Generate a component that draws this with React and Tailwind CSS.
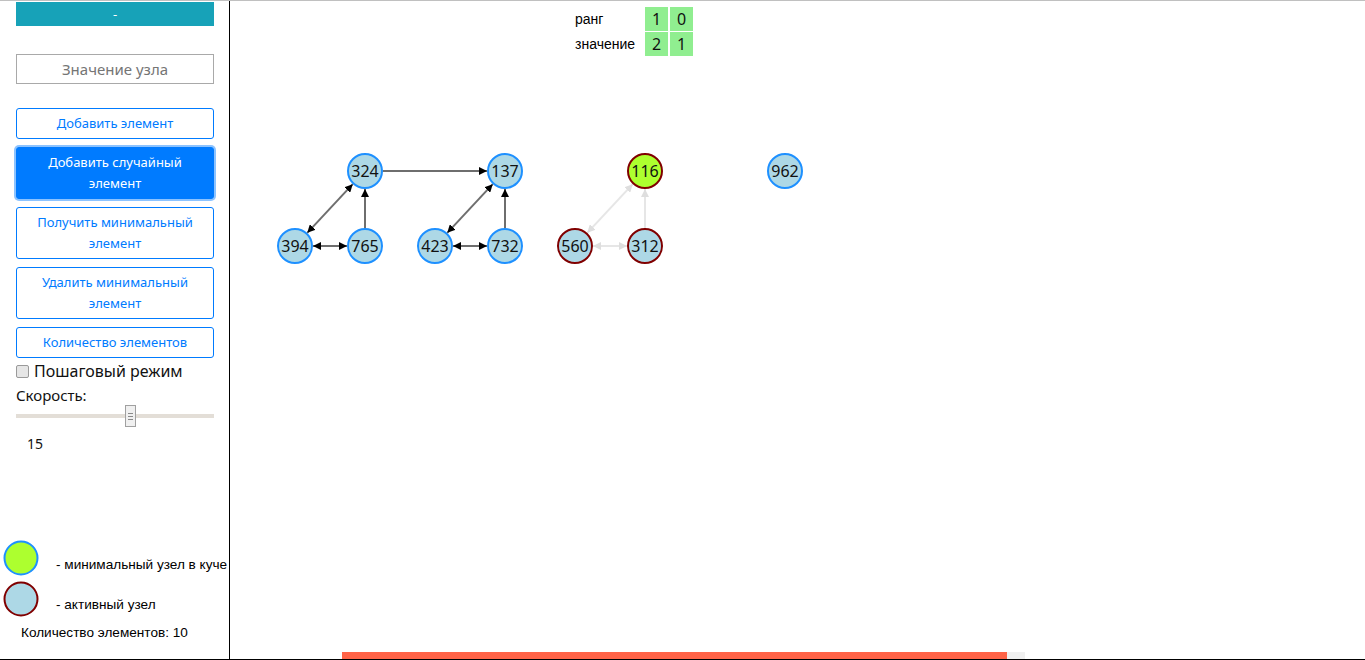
const nodes = {
  324: { x: 135, y: 115 },
  137: { x: 275, y: 115 },
  116: { x: 415, y: 115, fill: "#adff2f", active: true },
  962: { x: 555, y: 115 },
  394: { x: 65, y: 190 },
  765: { x: 135, y: 190 },
  423: { x: 205, y: 190 },
  732: { x: 275, y: 190 },
  560: { x: 345, y: 190, active: true },
  312: { x: 415, y: 190, active: true },
};

const edges = [
  { a: 324, b: 137 },
  { a: 765, b: 324 },
  { a: 394, b: 324, both: true },
  { a: 394, b: 765, both: true },
  { a: 423, b: 137, both: true },
  { a: 423, b: 732, both: true },
  { a: 732, b: 137 },
  { a: 560, b: 116, both: true, faded: true },
  { a: 560, b: 312, both: true, faded: true },
  { a: 312, b: 116, faded: true },
];

function Edge({ a, b, both, faded }) {
  const p = nodes[a];
  const q = nodes[b];
  const dx = q.x - p.x;
  const dy = q.y - p.y;
  const len = Math.hypot(dx, dy);
  const ux = dx / len;
  const uy = dy / len;
  const r = 18;
  const end = faded ? "url(#arrowLight)" : "url(#arrow)";
  return (
    <line
      x1={p.x + ux * r}
      y1={p.y + uy * r}
      x2={q.x - ux * r}
      y2={q.y - uy * r}
      stroke={faded ? "#e6e6e6" : "#6e6e6e"}
      strokeWidth="2"
      markerEnd={end}
      markerStart={both ? end : undefined}
    />
  );
}

function Graph() {
  return (
    <svg width="1135" height="260" className="block">
      <defs>
        <marker id="arrow" markerUnits="userSpaceOnUse" markerWidth="8" markerHeight="8" refX="8" refY="4" orient="auto-start-reverse">
          <path d="M0,0 L8,4 L0,8 z" fill="#000" />
        </marker>
        <marker id="arrowLight" markerUnits="userSpaceOnUse" markerWidth="8" markerHeight="8" refX="8" refY="4" orient="auto-start-reverse">
          <path d="M0,0 L8,4 L0,8 z" fill="#dedede" />
        </marker>
      </defs>
      {edges.map((e) => (
        <Edge key={e.a + "-" + e.b} {...e} />
      ))}
      {Object.entries(nodes).map(([v, n]) => (
        <g key={v}>
          <circle cx={n.x} cy={n.y} r="17" fill={n.fill || "#add8e6"} stroke={n.active ? "#800000" : "#1e90ff"} strokeWidth="2" />
          <text x={n.x} y={n.y + 6} textAnchor="middle" fontSize="16" fill="#111" style={{ fontFamily: '"Noto Sans", sans-serif' }}>
            {v}
          </text>
        </g>
      ))}
    </svg>
  );
}

function OutlineButton({ children, tall }) {
  return (
    <button className={`mt-[8px] w-[198px] ${tall ? "h-[52px]" : "h-[31px]"} rounded-[3px] border border-[#007bff] bg-white px-2 text-[13px] leading-[21px] text-[#007bff]`}>
      {children}
    </button>
  );
}

function Sidebar() {
  return (
    <div className="flex w-[230px] shrink-0 flex-col border-r border-black pl-4 pt-[1px] font-['Noto_Sans',sans-serif]">
      <button className="h-[24px] w-[198px] bg-[#17a2b8] text-[13px] leading-[24px] text-white">-</button>
      <input
        className="mt-[28px] h-[30px] w-[198px] border border-[#a9a9a9] text-center text-[15px] text-[#444] placeholder:text-[#757575] outline-none"
        placeholder="Значение узла"
      />
      <button className="mt-[24px] h-[31px] w-[198px] rounded-[3px] border border-[#007bff] bg-white text-[13px] text-[#007bff]">
        Добавить элемент
      </button>
      <button className="mt-[8px] h-[52px] w-[198px] rounded-[3px] border border-[#007bff] bg-[#007bff] px-2 text-[13px] leading-[21px] text-white shadow-[0_0_0_2px_rgba(0,123,255,0.45)]">
        Добавить случайный
        <br />
        элемент
      </button>
      <OutlineButton tall>
        Получить минимальный
        <br />
        элемент
      </OutlineButton>
      <OutlineButton tall>
        Удалить минимальный
        <br />
        элемент
      </OutlineButton>
      <OutlineButton>Количество элементов</OutlineButton>

      <label className="mt-[1px] flex h-[24px] items-center gap-[5px] text-[16px] text-[#111]">
        <input type="checkbox" className="h-[13px] w-[13px] appearance-none rounded-[2px] border border-[#9a9a9a] bg-[#e6e6e6]" />
        Пошаговый режим
      </label>
      <div className="text-[15px] leading-[24px] text-[#111]">Скорость:</div>
      <div className="relative h-[16px] w-[198px]">
        <div className="absolute left-0 right-0 top-[7px] h-[4px] bg-[#e3ded7]" />
        <div className="absolute left-[109px] top-[-2px] flex h-[22px] w-[11px] flex-col items-center justify-center gap-[2px] border border-[#a0a0a0] bg-[#f0f0f0]">
          <span className="h-px w-[5px] bg-[#8a8a8a]" />
          <span className="h-px w-[5px] bg-[#8a8a8a]" />
          <span className="h-px w-[5px] bg-[#8a8a8a]" />
        </div>
      </div>
      <div className="mt-[9px] pl-[11px] text-[14px] leading-[24px] text-[#111]">15</div>

      <div className="-ml-4 mt-auto pb-[16px] font-['Liberation_Sans',Arial,sans-serif] text-[13.6px] text-black">
        <div className="flex h-[36px] items-center">
          <svg width="36" height="36" className="ml-[3px] shrink-0">
            <circle cx="18" cy="18" r="16.5" fill="#adff2f" stroke="#1e90ff" strokeWidth="2" />
          </svg>
          <span className="ml-[17px] mt-[14px] whitespace-nowrap">- минимальный узел в куче</span>
        </div>
        <div className="mt-[5px] flex h-[36px] items-center">
          <svg width="36" height="36" className="ml-[3px] shrink-0">
            <circle cx="18" cy="18" r="16.5" fill="#add8e6" stroke="#800000" strokeWidth="2" />
          </svg>
          <span className="ml-[17px] mt-[12px] whitespace-nowrap">- активный узел</span>
        </div>
        <div className="mt-[6px] pl-[21px] leading-[20px]">Количество элементов: 10</div>
      </div>
    </div>
  );
}

function RankTable() {
  const label = "flex h-[24px] items-center pl-[2px] font-['Liberation_Sans',Arial,sans-serif] text-[14px] text-black";
  const cell = "flex h-[24px] items-center justify-center bg-[#90ee90] font-['Noto_Sans',sans-serif] text-[16px] text-[#111]";
  return (
    <div className="ml-[343px] mt-[6px] grid w-max grid-cols-[70px_23px_23px] gap-x-[2px] gap-y-[1px]">
      <div className={label}>ранг</div>
      <div className={cell}>1</div>
      <div className={cell}>0</div>
      <div className={label}>значение</div>
      <div className={cell}>2</div>
      <div className={cell}>1</div>
    </div>
  );
}

export default function App() {
  return (
    <div className="flex h-[660px] w-[1365px] flex-col overflow-hidden border-b border-t border-b-black border-t-[#c0c0c0] bg-white">
      <div className="flex min-h-0 flex-1">
        <Sidebar />
        <div className="flex flex-1 flex-col">
          <RankTable />
          <Graph />
          <div className="ml-[112px] mt-auto flex">
            <div className="h-[7px] w-[665px] bg-[#ff6347]" />
            <div className="h-[7px] w-[18px] bg-[#f0f0f0]" />
          </div>
        </div>
      </div>
    </div>
  );
}
